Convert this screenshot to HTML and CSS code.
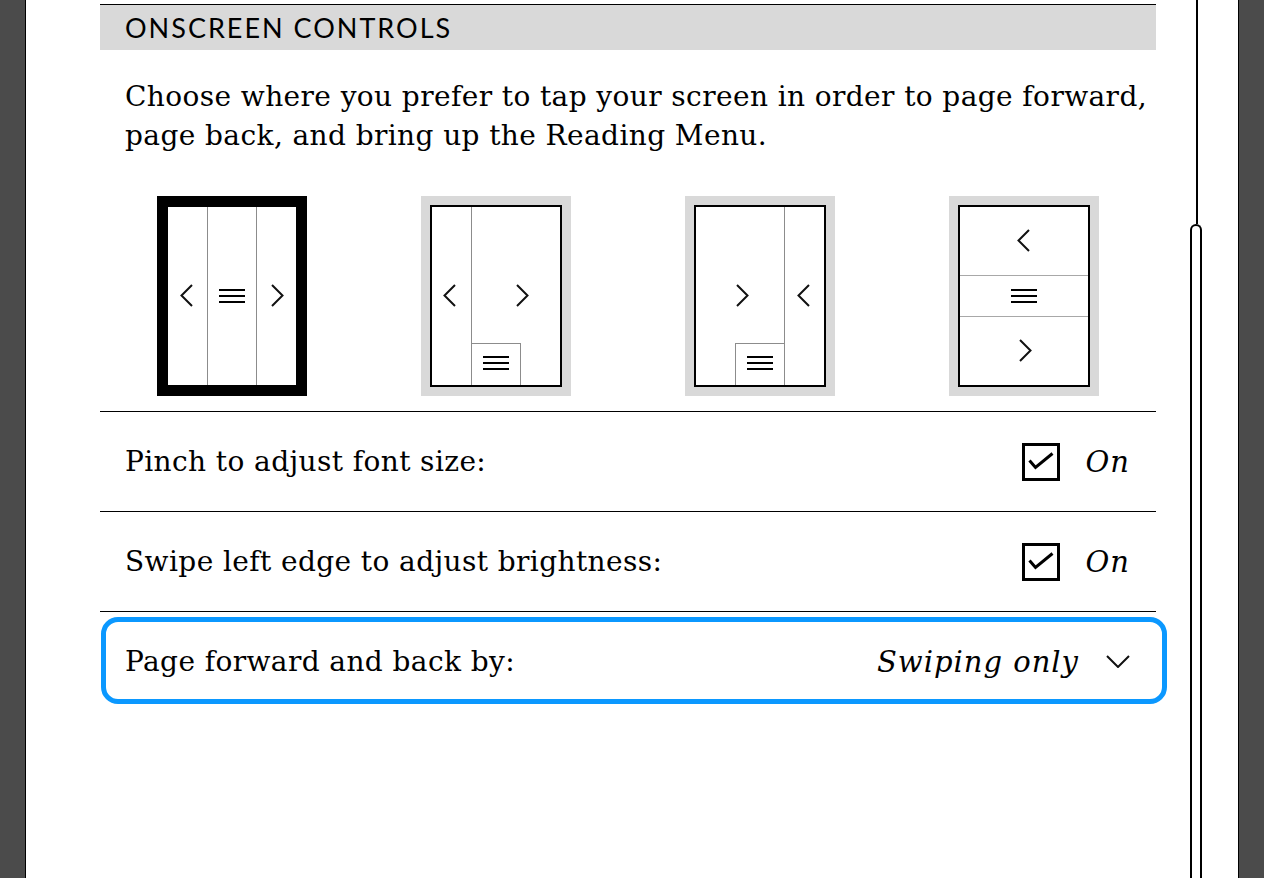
FILE: index.html
```html
<!DOCTYPE html>
<html lang="en">
<head>
<meta charset="utf-8">
<title>Onscreen Controls</title>
<link rel="stylesheet" href="styles.css">
</head>
<body>
<div class="screen">
  <main class="content">
    <section class="section">
      <h2 class="section-title">ONSCREEN CONTROLS</h2>
      <p class="intro">Choose where you prefer to tap your screen in order to page forward,<br>page back, and bring up the Reading Menu.</p>

      <div class="layouts">
        <div class="layout selected">
          <div class="layout-inner">
            <span class="vline" style="left:39px"></span>
            <span class="vline" style="left:88px"></span>
            <svg class="chev" style="left:12px;top:77px" viewBox="0 0 13 23"><path d="M12 1 L1.5 11.5 L12 22"/></svg>
            <svg class="menu" style="left:51px;top:82px" viewBox="0 0 26 14"><path d="M0 1H26M0 7H26M0 13H26"/></svg>
            <svg class="chev" style="left:103px;top:77px" viewBox="0 0 13 23"><path d="M1 1 L11.5 11.5 L1 22"/></svg>
          </div>
        </div>

        <div class="layout">
          <div class="layout-inner">
            <span class="vline" style="left:39px"></span>
            <span class="cell" style="left:39px"></span>
            <svg class="chev" style="left:11px;top:77px" viewBox="0 0 13 23"><path d="M12 1 L1.5 11.5 L12 22"/></svg>
            <svg class="chev" style="left:84px;top:77px" viewBox="0 0 13 23"><path d="M1 1 L11.5 11.5 L1 22"/></svg>
            <svg class="menu" style="left:51px;top:149px" viewBox="0 0 26 14"><path d="M0 1H26M0 7H26M0 13H26"/></svg>
          </div>
        </div>

        <div class="layout">
          <div class="layout-inner">
            <span class="vline" style="left:88px"></span>
            <span class="cell" style="left:39px"></span>
            <svg class="chev" style="left:40px;top:77px" viewBox="0 0 13 23"><path d="M1 1 L11.5 11.5 L1 22"/></svg>
            <svg class="chev" style="left:101px;top:77px" viewBox="0 0 13 23"><path d="M12 1 L1.5 11.5 L12 22"/></svg>
            <svg class="menu" style="left:51px;top:149px" viewBox="0 0 26 14"><path d="M0 1H26M0 7H26M0 13H26"/></svg>
          </div>
        </div>

        <div class="layout">
          <div class="layout-inner">
            <span class="hline" style="top:68px"></span>
            <span class="hline" style="top:109px"></span>
            <svg class="chev" style="left:57px;top:22px" viewBox="0 0 13 23"><path d="M12 1 L1.5 11.5 L12 22"/></svg>
            <svg class="menu" style="left:51px;top:82px" viewBox="0 0 26 14"><path d="M0 1H26M0 7H26M0 13H26"/></svg>
            <svg class="chev" style="left:59px;top:132px" viewBox="0 0 13 23"><path d="M1 1 L11.5 11.5 L1 22"/></svg>
          </div>
        </div>
      </div>

      <div class="setting-row">
        <span class="setting-label">Pinch to adjust font size:</span>
        <span class="setting-value">
          <span class="checkbox"><svg viewBox="0 0 32 32"><path d="M4.5 14.5 L10.5 21.5 L27.5 7.5"/></svg></span>
          <em class="state">On</em>
        </span>
      </div>

      <div class="setting-row">
        <span class="setting-label">Swipe left edge to adjust brightness:</span>
        <span class="setting-value">
          <span class="checkbox"><svg viewBox="0 0 32 32"><path d="M4.5 14.5 L10.5 21.5 L27.5 7.5"/></svg></span>
          <em class="state">On</em>
        </span>
      </div>

      <div class="setting-row dropdown focused">
        <span class="setting-label">Page forward and back by:</span>
        <span class="setting-value">
          <em class="state">Swiping only</em>
          <svg class="caret" viewBox="0 0 24 13"><path d="M1 1 L12 12 L23 1"/></svg>
        </span>
      </div>
    </section>
  </main>

  <div class="scrollbar">
    <div class="track"></div>
    <div class="thumb"></div>
  </div>
</div>
</body>
</html>
```

FILE: styles.css
```css
html, body {
  margin: 0;
  padding: 0;
}

body {
  background: #4b4b4b;
  height: 878px;
  overflow: hidden;
  font-family: "DejaVu Serif", "Liberation Serif", serif;
  color: #000;
}

.screen {
  margin: 0 25px;
  height: 878px;
  background: #fff;
  border-left: 1px solid #000;
  border-right: 1px solid #000;
  display: flex;
}

.content {
  margin-left: 74px;
  width: 1056px;
  padding-top: 4px;
  flex: none;
}

.section-title {
  margin: 0;
  border-top: 1px solid #000;
  background: #d9d9d9;
  height: 45px;
  line-height: 45px;
  padding-left: 25px;
  font-family: Lato, "Open Sans", sans-serif;
  font-weight: 400;
  font-size: 27px;
  letter-spacing: 2px;
}

.intro {
  margin: 27px 0 0;
  padding-left: 25px;
  font-size: 28px;
  letter-spacing: 0.4px;
  line-height: 39px;
  white-space: nowrap;
}

.layouts {
  margin-top: 41px;
  padding: 0 57px;
  display: flex;
  gap: 114px;
}

.layout {
  width: 150px;
  height: 200px;
  box-sizing: border-box;
  padding: 9px;
  background: #d9d9d9;
}

.layout.selected {
  background: #000;
}

.layout-inner {
  position: relative;
  height: 100%;
  box-sizing: border-box;
  border: 2px solid #000;
  background: #fff;
}

.vline {
  position: absolute;
  top: 0;
  bottom: 0;
  width: 1px;
  background: #8c8c8c;
}

.hline {
  position: absolute;
  left: 0;
  right: 0;
  height: 1px;
  background: #a8a8a8;
}

.cell {
  position: absolute;
  top: 136px;
  bottom: 0;
  width: 50px;
  box-sizing: border-box;
  border: 1px solid #8c8c8c;
  border-bottom: none;
}

.chev {
  position: absolute;
  width: 13px;
  height: 23px;
  fill: none;
  stroke: #111;
  stroke-width: 2;
}

.menu {
  position: absolute;
  width: 26px;
  height: 14px;
  fill: none;
  stroke: #000;
  stroke-width: 2;
}

.setting-row {
  height: 99px;
  border-top: 1px solid #000;
  display: flex;
  align-items: center;
  justify-content: space-between;
  padding: 0 26px 0 25px;
  font-size: 28px;
  letter-spacing: 0.4px;
}

.layouts + .setting-row {
  margin-top: 15px;
}

.setting-row.focused {
  position: relative;
}

.setting-row.focused::after {
  content: "";
  position: absolute;
  left: 1px;
  right: -11px;
  top: 5px;
  bottom: 7px;
  border: 5px solid #0b98ff;
  border-radius: 17px;
}

.setting-value {
  display: flex;
  align-items: center;
}

.checkbox {
  width: 38px;
  height: 38px;
  box-sizing: border-box;
  border: 3px solid #000;
  display: flex;
}

.checkbox svg {
  width: 32px;
  height: 32px;
  fill: none;
  stroke: #000;
  stroke-width: 3;
}

.state {
  font-style: italic;
  font-size: 29px;
  letter-spacing: 1px;
  margin-left: 26px;
}

.dropdown .state {
  margin-left: 0;
}

.caret {
  width: 24px;
  height: 13px;
  margin-left: 27px;
  fill: none;
  stroke: #111;
  stroke-width: 2;
}

.scrollbar {
  margin-left: 34px;
  width: 12px;
  display: flex;
  flex-direction: column;
  align-items: center;
}

.track {
  width: 2px;
  height: 224px;
  background: #000;
  margin-left: 2px;
}

.thumb {
  flex: 1;
  width: 12px;
  box-sizing: border-box;
  border: 2px solid #000;
  border-bottom: none;
  border-radius: 6px 6px 0 0;
}
```
